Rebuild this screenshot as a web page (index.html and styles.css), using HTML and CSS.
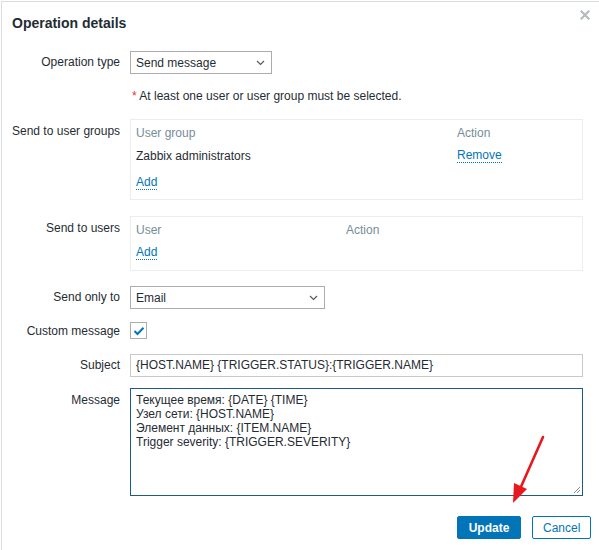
FILE: index.html
```html
<!DOCTYPE html>
<html>
<head>
<meta charset="utf-8">
<link rel="stylesheet" href="styles.css">
</head>
<body>
<div class="dialog">
  <div class="head">
    <h4 class="title">Operation details</h4>
    <span class="close" aria-label="Close">
      <svg width="10" height="10" viewBox="0 0 10 10"><path d="M1.5 1.5 L8.5 8.5 M8.5 1.5 L1.5 8.5" stroke="#b5bcc0" stroke-width="2.2" stroke-linecap="square"/></svg>
    </span>
  </div>
  <div class="form">
    <div class="lbl r-op">Operation type</div>
    <div class="fld r-op">
      <div class="select w142"><span>Send message</span><svg class="chev" width="9" height="6" viewBox="0 0 9 6"><path d="M1 1 L4.5 4.5 L8 1" fill="none" stroke="#555" stroke-width="1.1"/></svg></div>
    </div>

    <div class="lbl r-note"></div>
    <div class="fld r-note note"><span class="ast">*</span> At least one user or user group must be selected.</div>

    <div class="lbl r-grp top">Send to user groups</div>
    <div class="fld r-grp">
      <div class="box grp">
        <div class="trow th"><span class="c1 wg">User group</span><span>Action</span></div>
        <div class="trow td"><span class="c1 wg">Zabbix administrators</span><a class="link">Remove</a></div>
        <div class="trow add"><a class="link">Add</a></div>
      </div>
    </div>

    <div class="lbl r-usr top">Send to users</div>
    <div class="fld r-usr">
      <div class="box usr">
        <div class="trow th"><span class="c1 wu">User</span><span>Action</span></div>
        <div class="trow add2"><a class="link">Add</a></div>
      </div>
    </div>

    <div class="lbl r-only">Send only to</div>
    <div class="fld r-only">
      <div class="select w195"><span>Email</span><svg class="chev" width="9" height="6" viewBox="0 0 9 6"><path d="M1 1 L4.5 4.5 L8 1" fill="none" stroke="#555" stroke-width="1.1"/></svg></div>
    </div>

    <div class="lbl r-cm">Custom message</div>
    <div class="fld r-cm">
      <span class="check"><svg width="12" height="10" viewBox="0 0 12 10"><path d="M1.5 5 L4.5 8 L10.5 1.8" fill="none" stroke="#0275b8" stroke-width="2"/></svg></span>
    </div>

    <div class="lbl r-subj">Subject</div>
    <div class="fld r-subj"><div class="input">{HOST.NAME} {TRIGGER.STATUS}:{TRIGGER.NAME}</div></div>

    <div class="lbl r-msg top">Message</div>
    <div class="fld r-msg">
      <div class="textarea">Текущее время: {DATE} {TIME}<br>Узел сети: {HOST.NAME}<br>Элемент данных: {ITEM.NAME}<br>Trigger severity: {TRIGGER.SEVERITY}
        <svg class="grip" width="9" height="9" viewBox="0 0 9 9"><path d="M8 2 L2 8 M8 5 L5 8" stroke="#888" stroke-width="1"/></svg>
      </div>
    </div>
  </div>
  <div class="footer">
    <button class="btn primary">Update</button>
    <button class="btn alt">Cancel</button>
  </div>
  <svg class="arrow" width="60" height="80" viewBox="0 0 60 80"><path d="M40 6 L17 58" stroke="#e8191e" stroke-width="2.6" stroke-linecap="round"/><path d="M10 72 L11 52 L24 58 Z" fill="#e8191e"/></svg>
</div>
</body>
</html>
```

FILE: styles.css
```css
* { box-sizing: border-box; }
html, body { margin: 0; padding: 0; background: #fff; }
body {
  font-family: "Liberation Sans", Arial, sans-serif;
  font-size: 12px;
  color: #1f2c33;
  width: 599px;
  height: 550px;
  overflow: hidden;
}
.dialog {
  position: relative;
  margin: 1px 0 0 1px;
  border-top: 1px solid #d9dde0;
  border-left: 1px solid #d9dde0;
  height: 549px;
}
.head {
  position: relative;
  height: 44px;
  padding: 12px 0 0 10px;
}
.title {
  margin: 0;
  font-size: 14px;
  font-weight: bold;
  line-height: 18px;
  color: #1f2c33;
}
.close {
  position: absolute;
  right: 9px;
  top: 8px;
  line-height: 0;
}
.form {
  display: grid;
  grid-template-columns: 108px 453px;
  column-gap: 10px;
  padding-left: 10px;
  padding-top: 5px;
}
.lbl {
  text-align: right;
  line-height: 14px;
  padding-top: 4px;
  white-space: nowrap;
}
.lbl.top { padding-top: 5px; }
.r-op { margin-bottom: 15px; }
.r-note { margin-bottom: 16px; }
.r-grp { margin-bottom: 16px; }
.r-usr { margin-bottom: 15px; }
.r-only { margin-bottom: 13px; }
.r-cm { margin-bottom: 15px; }
.r-subj { margin-bottom: 11px; }
.lbl.r-cm { padding-top: 2px; }
.note { line-height: 14px; padding-left: 2px; }
.ast { color: #e33734; }
.select {
  height: 23px;
  border: 1px solid #acacac;
  display: flex;
  align-items: center;
  justify-content: space-between;
  padding: 0 6px 0 5px;
  background: #fff;
}
.w142 { width: 142px; }
.w195 { width: 195px; }
.chev { display: block; }
.box {
  border: 1px solid #ebeef0;
  padding: 6px 5px 0 5px;
}
.box.grp { height: 81px; }
.box.usr { height: 55px; }
.trow { display: flex; line-height: 14px; }
.th { color: #768d99; }
.grp .td { margin-top: 9px; }
.grp .add { margin-top: 13px; }
.usr .add2 { margin-top: 9px; }
.wg { width: 321px; }
.wu { width: 210px; }
.link {
  color: #0275b8;
  border-bottom: 1px dotted #0275b8;
  line-height: 13px;
  cursor: pointer;
}
.check {
  display: flex;
  align-items: center;
  justify-content: center;
  width: 17px;
  height: 17px;
  border: 1px solid #acacac;
  background: #fff;
}
.input {
  height: 23px;
  border: 1px solid #c9c9c9;
  padding: 0 5px;
  line-height: 21px;
}
.textarea {
  position: relative;
  height: 108px;
  border: 1px solid #1f5c85;
  padding: 4px 5px;
  line-height: 14px;
}
.grip { position: absolute; right: 1px; bottom: 1px; }
.footer {
  display: flex;
  justify-content: flex-end;
  gap: 11px;
  margin-top: 20px;
  padding-right: 8px;
}
.btn {
  height: 23px;
  font-family: "Liberation Sans", Arial, sans-serif;
  font-size: 12px;
  padding: 0 10px;
  border-radius: 2px;
  cursor: pointer;
}
.primary {
  width: 64px;
  background: #0275b8;
  border: 1px solid #0275b8;
  color: #fff;
  font-weight: bold;
}
.alt {
  width: 59px;
  background: #fff;
  border: 1px solid #0275b8;
  color: #0275b8;
}
.arrow {
  position: absolute;
  left: 501px;
  top: 429px;
}
```
